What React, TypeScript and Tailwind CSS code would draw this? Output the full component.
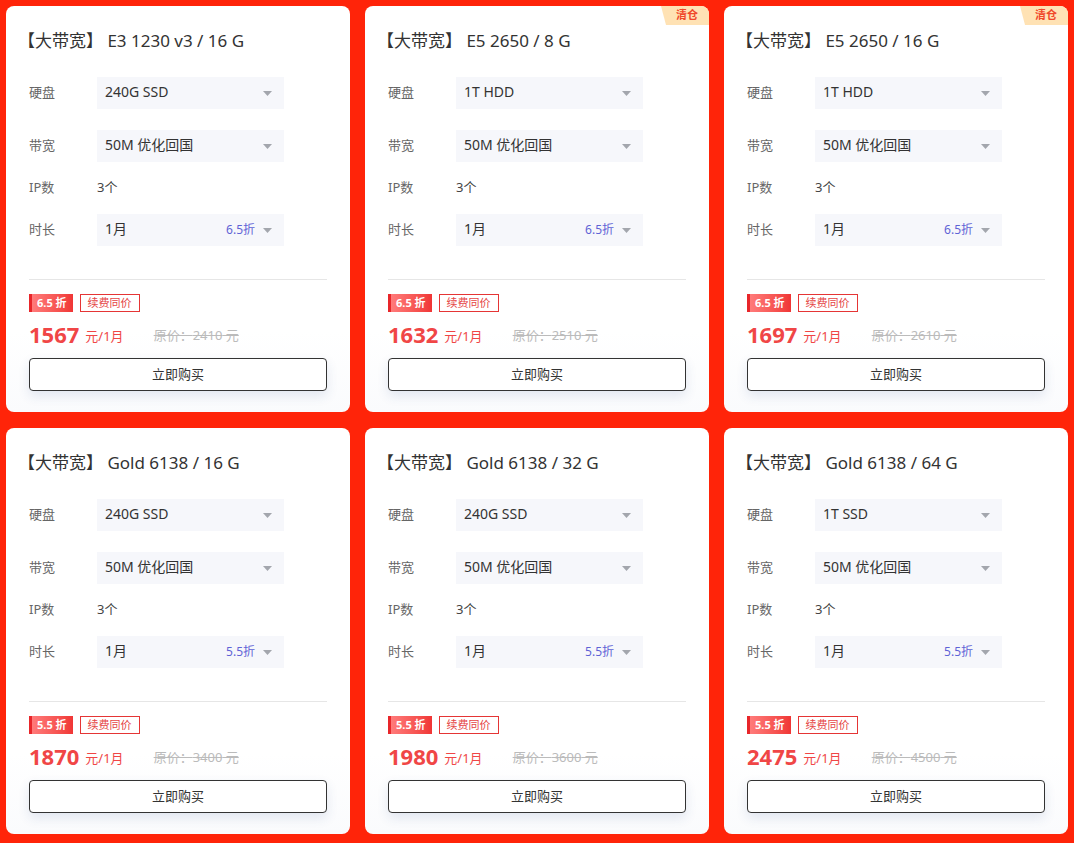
import { ReactNode } from "react";

type Plan = {
  cpu: string;
  disk: string;
  discount: string;
  price: number;
  original: number;
  clearance?: boolean;
};

const plans: Plan[] = [
  { cpu: "E3 1230 v3 / 16 G", disk: "240G SSD", discount: "6.5", price: 1567, original: 2410 },
  { cpu: "E5 2650 / 8 G", disk: "1T HDD", discount: "6.5", price: 1632, original: 2510, clearance: true },
  { cpu: "E5 2650 / 16 G", disk: "1T HDD", discount: "6.5", price: 1697, original: 2610, clearance: true },
  { cpu: "Gold 6138 / 16 G", disk: "240G SSD", discount: "5.5", price: 1870, original: 3400 },
  { cpu: "Gold 6138 / 32 G", disk: "240G SSD", discount: "5.5", price: 1980, original: 3600 },
  { cpu: "Gold 6138 / 64 G", disk: "1T SSD", discount: "5.5", price: 2475, original: 4500 },
];

function Caret() {
  return (
    <svg width="9" height="5" viewBox="0 0 9 5" className="shrink-0">
      <polygon points="0,0 9,0 4.5,5" fill="#a3a6ad" />
    </svg>
  );
}

function Row({ label, children, className }: { label: string; children: ReactNode; className?: string }) {
  return (
    <div className={`flex h-8 items-center ${className ?? ""}`}>
      <div className="w-[68px] shrink-0 text-[13px] text-[#666]">{label}</div>
      {children}
    </div>
  );
}

function Select({ value, extra }: { value: string; extra?: string }) {
  return (
    <div className="flex h-8 w-[187px] items-center bg-[#f6f7fb] pl-2 pr-3">
      <span className="flex-1 pb-[3px] text-[14px] text-[#333]">{value}</span>
      {extra && <span className="mr-2 text-[12px] text-[#5f63d6]">{extra}</span>}
      <Caret />
    </div>
  );
}

function Card({ plan }: { plan: Plan }) {
  return (
    <div className="relative overflow-hidden rounded-lg bg-gradient-to-b from-white from-80% to-[#fafbfd] px-[23px] pt-[23px] pb-[21px]">
      {plan.clearance && (
        <div className="absolute top-0 right-0 flex h-[19px] w-[48px] items-center justify-center bg-[#ffe2b4] pl-1 text-[11px] font-bold text-[#f0482a] [clip-path:polygon(0_0,100%_0,100%_100%,5px_100%)]">
          清仓
        </div>
      )}
      <div className="-ml-[11px] h-6 text-[17px] leading-6 text-[#333]">【大带宽】 {plan.cpu}</div>

      <Row label="硬盘" className="mt-6">
        <Select value={plan.disk} />
      </Row>
      <Row label="带宽" className="mt-[21px]">
        <Select value="50M 优化回国" />
      </Row>
      <Row label="IP数" className="mt-[10px]">
        <span className="text-[13px] text-[#444]">3个</span>
      </Row>
      <Row label="时长" className="mt-[10px]">
        <Select value="1月" extra={`${plan.discount}折`} />
      </Row>

      <div className="mt-[33px] h-px bg-[#e6e6e6]" />

      <div className="mt-[14px] flex h-[18px] items-center gap-[7px]">
        <span className="flex h-[18px] items-center border-l-[3px] border-[#e8262a] bg-gradient-to-r from-[#ff7a7a] to-[#f03535] pl-[5px] pr-[6px] text-[11px] font-bold text-white">
          {plan.discount} 折
        </span>
        <span className="flex h-[18px] items-center border border-[#e53535] px-[7px] text-[11px] text-[#e54545]">
          续费同价
        </span>
      </div>

      <div className="mt-[7px] flex h-[30px] items-center">
        <span className="text-[22px] font-bold text-[#f04646]">{plan.price}</span>
        <span className="ml-[6px] mt-[5px] text-[13px] text-[#f04646]">元/1月</span>
        <span className="ml-[30px] mt-[3px] text-[13px] text-[#bbb] line-through">原价：{plan.original} 元</span>
      </div>

      <button className="mt-[9px] flex h-[33px] w-full items-center justify-center rounded border border-[#333] bg-white text-[13px] text-[#333] shadow-[0_5px_12px_rgba(40,70,140,0.12)]">
        立即购买
      </button>
    </div>
  );
}

export default function App() {
  return (
    <div
      className="min-h-[843px] w-full bg-[#ff2409] p-[6px]"
      style={{ fontFamily: '"Noto Sans", "Noto Sans CJK SC", sans-serif' }}
    >
      <div className="grid grid-cols-[344px_344px_344px] gap-x-[15px] gap-y-4">
        {plans.map((p) => (
          <Card key={p.cpu} plan={p} />
        ))}
      </div>
    </div>
  );
}
